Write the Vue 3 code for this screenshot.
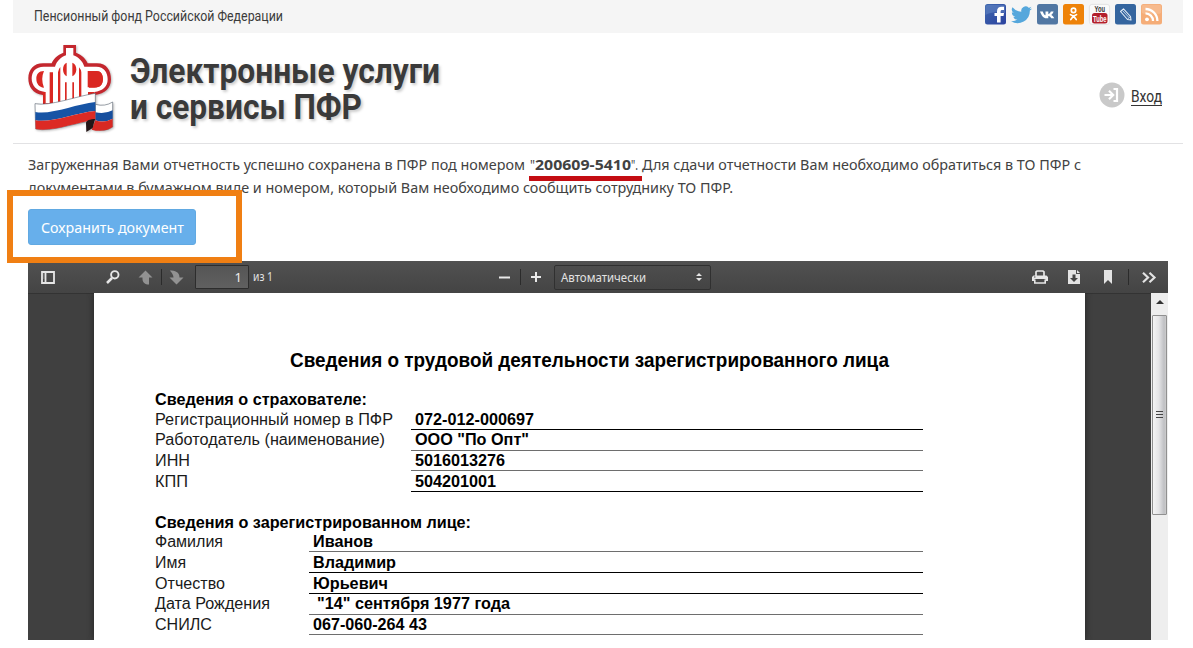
<script setup>
import { h } from 'vue'

// One line of text set to an exact measure; b is the baseline inside the box.
const Line = (p) =>
  h('svg', { width: p.w, height: p.h, class: 'line' }, [
    h('text', { x: 0, y: p.b, textLength: p.w, lengthAdjust: 'spacingAndGlyphs', fill: 'currentColor' }, p.t),
  ])
Line.props = ['t', 'w', 'h', 'b']

const sections = [
  {
    title: 'Сведения о страхователе:', w: 212, kind: 'wide',
    rows: [
      { k: 'Регистрационный номер в ПФР', kw: 238, v: '072-012-000697', vw: 119, h: 21, dark: true },
      { k: 'Работодатель (наименование)', kw: 230, v: 'ООО "По Опт"', vw: 114, h: 21, up: 1 },
      { k: 'ИНН', kw: 35, v: '5016013276', vw: 90, h: 20 },
      { k: 'КПП', kw: 33, v: '504201001', vw: 81, h: 21, dark: true },
    ],
  },
  {
    title: 'Сведения о зарегистрированном лице:', w: 316, kind: 'narrow',
    rows: [
      { k: 'Фамилия', kw: 68, v: 'Иванов', vw: 60, h: 20 },
      { k: 'Имя', kw: 31, v: 'Владимир', vw: 83, h: 21, dark: true },
      { k: 'Отчество', kw: 70, v: 'Юрьевич', vw: 75, h: 21, dark: true },
      { k: 'Дата Рождения', kw: 115, v: '"14" сентября 1977 года', vw: 193, h: 21, shift: true, up: 1 },
      { k: 'СНИЛС', kw: 57, v: '067-060-264 43', vw: 114, h: 20 },
    ],
  },
]
</script>

<template>
  <div class="page">
    <div class="topbar">
      <Line class="org" t="Пенсионный фонд Российской Федерации" :w="249" :h="33" :b="21" />
      <div class="social">
        <svg viewBox="0 0 21 21">
          <defs><linearGradient id="fb" x2="1" y2="1"><stop stop-color="#3f68ae" /><stop offset="1" stop-color="#2b429f" /></linearGradient></defs>
          <rect width="21" height="20.5" rx="2.5" fill="url(#fb)" />
          <path d="M.5 11Q7 7 20 9V3Q20 1 18 1H3Q.5 1 .5 3Z" fill="#6c8fca" opacity=".45" />
          <path d="M12 18.500V12H9.500V9H12V7.200C12 4 14 2.700 16.500 2.700H19V6H17.300C16 6 15.600 6.600 15.600 7.600V9H19L18.500 12H15.600V18.500Z" fill="#fff" />
        </svg>
        <svg viewBox="0 0 21 21"><path transform="translate(0 .5) scale(.875 .86)" d="M24 4.600a10 10 0 0 1-2.800.8 5 5 0 0 0 2.100-2.700 10 10 0 0 1-3.100 1.200A4.900 4.900 0 0 0 11.800 8.300 14 14 0 0 1 1.700 3.200a4.900 4.900 0 0 0 1.500 6.500 5 5 0 0 1-2.200-.6 4.900 4.900 0 0 0 3.900 4.900 5 5 0 0 1-2.200.1 4.900 4.900 0 0 0 4.600 3.400A10 10 0 0 1 0 19.500a14 14 0 0 0 21.500-12.400A10 10 0 0 0 24 4.600z" fill="#55a7dc" /></svg>
        <svg viewBox="0 0 21 21">
          <rect width="21" height="20.500" rx="2.500" fill="#5177a3" />
          <path d="M10.400 14.300H9.300C6.400 14.300 4.500 11.700 3 7.500H5.800C6.500 9.800 7.500 11 8.500 11.300V7.500H11.300V10C12.400 9.900 13.300 8.700 13.800 7.500H16.600C16.200 9 15.200 10.200 14.300 10.900C15.400 11.500 16.600 12.700 17.300 14.300H14.200C13.700 13.200 12.700 12.200 11.300 12V14.300Z" fill="#fff" />
        </svg>
        <svg viewBox="0 0 21 21">
          <rect width="21" height="20.500" rx="2.500" fill="#ee8208" />
          <circle cx="10.500" cy="6.400" r="2.200" fill="none" stroke="#fff" stroke-width="1.700" />
          <path d="M7.500 10.600Q10.500 13 13.500 10.600M10.500 12L7.800 15.600M10.500 12L13.200 15.600" fill="none" stroke="#fff" stroke-width="1.700" stroke-linecap="round" />
        </svg>
        <svg viewBox="0 0 21 21">
          <rect x=".4" y=".4" width="20.200" height="20" rx="2.500" fill="#fafafa" stroke="#ddd" stroke-width=".7" />
          <rect x="3" y="9" width="15.500" height="10.500" rx="2.500" fill="#b3202c" />
          <text class="yt" x="5.500" y="8" textLength="10.500" lengthAdjust="spacingAndGlyphs" fill="#333">You</text>
          <text class="yt" x="4" y="17.500" textLength="13.500" lengthAdjust="spacingAndGlyphs" fill="#fff">Tube</text>
        </svg>
        <svg viewBox="0 0 21 21">
          <rect width="21" height="20.500" rx="2.500" fill="#34659f" />
          <path d="M5.500 7.500L8.500 4.800L15.500 12.500L16 16L12.500 15.500Z" fill="none" stroke="#e4edf7" stroke-width="1.100" stroke-linejoin="round" />
          <path d="M7.500 6.500L14 13.500M12.500 15.200L15.300 12.500" fill="none" stroke="#e4edf7" stroke-width=".8" />
        </svg>
        <svg viewBox="0 0 21 21">
          <rect width="21" height="20.500" rx="2.500" fill="#f5ad78" />
          <rect x=".8" y=".8" width="19.400" height="9" rx="2" fill="#f8c39b" opacity=".6" />
          <circle cx="6" cy="15.300" r="1.900" fill="#fff" />
          <path d="M4.500 9.400A7.500 7.500 0 0 1 12 17M4.500 5A12 12 0 0 1 16.400 17" fill="none" stroke="#fff" stroke-width="2.300" />
        </svg>
      </div>
    </div>

    <div class="header">
      <svg class="logo" viewBox="36 24 264 276">
        <path d="M145 30H183V53C201 60 213 72 218 85H246C276 85 288 108 288 133C288 160 270 176 240 180V212H84V180C52 176 40 154 40 130C40 104 56 85 84 85H110C115 72 127 60 145 53Z" fill="#c4272e" />
        <path d="M153 39H175V61C191 67 203 79 208 95H244C267 95 278 112 278 133C278 156 263 168 238 171V205H90V171C64 168 50 152 50 130C50 110 62 95 86 95H120C125 79 137 67 153 61Z" fill="#fff" />
        <path d="M87 108C71 108 64 118 64 131C64 146 72 156 87 158C80 140 80 124 87 108Z" fill="#da2822" />
        <path d="M222 108H243C258 108 264 118 264 132C264 149 255 158 238 158H222V147H240C248 146 250 139 250 132C250 125 247 121 240 121H222Z" fill="#da2822" />
        <path d="M218 108H244C258 108 263 118 263 132C263 149 255 157 240 157H218Z" fill="#da2822" />
        <path d="M104 112H114V205H104ZM129 112Q131 101 136 96V205H129ZM150 142H155V205H150ZM172 142H177V205H172ZM192 97Q198 103 199 112V205H192Z" fill="#da2822" />
        <path d="M155 83Q144 88 144 104Q145 118 155 124ZM172 83Q184 88 184 104Q183 118 172 124Z" fill="#da2822" />
        <path d="M80 171H92V205H84V180ZM219 171H238V205H219Z" fill="#da2822" />
        <g stroke="#394454" stroke-width="1.500">
          <path d="M241 208Q270 216 293 201V276Q265 294 240 279Z" fill="#fff" />
          <path d="M60 206C105 215 185 183 241 175V256C181 262 110 292 62 282Z" fill="#fff" />
        </g>
        <path d="M241 232Q270 238 293 226V251Q268 265 241 256Z" fill="#174f9e" />
        <path d="M241 256Q268 265 293 251V276Q265 294 230 284Z" fill="#d72923" />
        <path d="M61 231C110 240 183 207 241 201V228C183 233 109 265 61 256Z" fill="#1754a5" />
        <path d="M61 256C109 265 183 233 241 228V255C183 262 110 292 62 282Z" fill="#dc2a24" />
        <path d="M241 252C225 252 213 257 213 264L214 291L233 279L239 256Z" fill="#241617" />
      </svg>
      <div class="brand">
        <Line t="Электронные услуги" :w="310" :h="36" :b="29" />
        <Line t="и сервисы ПФР" :w="232" :h="36" :b="29" />
      </div>
      <div class="login">
        <svg width="26" height="26" viewBox="0 0 26 26">
          <circle cx="13" cy="13" r="12.500" fill="#c9c9c9" />
          <path d="M5.500 13H13.500M10 8.800L14.200 13L10 17.200M14.500 7H18V19H14.500" fill="none" stroke="#fff" stroke-width="2.200" />
        </svg>
        <a class="enter"><Line t="Вход" :w="31" :h="19" :b="16" /></a>
      </div>
    </div>

    <div class="message">
      <div class="row">
        <Line t="Загруженная Вами отчетность успешно сохранена в ПФР под номером" :w="497" :h="23" :b="16" />
        <span class="number">
          <Line t="&quot;" :w="5" :h="23" :b="16" />
          <Line class="bold" t="200609-5410" :w="96" :h="23" :b="16" />
          <Line t="&quot;." :w="7" :h="23" :b="16" />
        </span>
        <Line t="Для сдачи отчетности Вам необходимо обратиться в ТО ПФР с" :w="439" :h="23" :b="16" />
      </div>
      <div class="row">
        <Line t="документами в бумажном виде и номером, который Вам необходимо сообщить сотруднику ТО ПФР." :w="705" :h="23" :b="16" />
      </div>
    </div>

    <div class="action">
      <button class="save"><Line t="Сохранить документ" :w="143" :h="36" :b="24" /></button>
      <div class="highlight"></div>
    </div>

    <div class="viewer">
      <div class="toolbar">
        <svg class="i-side" width="14" height="13" viewBox="0 0 14 13"><path d="M1 1H13V12H1ZM4.500 1V12" fill="none" stroke="#e6e6e6" stroke-width="1.800" /><path d="M2 3H4M2 5H4M2 7H4" stroke="#aaa" stroke-width=".6" /></svg>
        <svg class="i-find" width="14" height="14" viewBox="0 0 14 14"><circle cx="8.800" cy="4.800" r="3.700" fill="none" stroke="#e6e6e6" stroke-width="1.900" /><path d="M6 8L1 13" stroke="#e6e6e6" stroke-width="2.500" /></svg>
        <svg class="i-up" width="15" height="15" viewBox="0 0 15 15"><path d="M7.500 .5L14.500 7.500H11V14.500C7 14.500 4.500 12.500 4.500 9V7.500H.5Z" fill="#929292" /></svg>
        <i class="sep"></i>
        <svg class="i-down" width="15" height="15" viewBox="0 0 15 15"><path d="M7.500 14.500L.5 7.500H4.500C4.500 5 3 3 .8 .5C6 .5 10.500 2 10.500 7.500H14.500Z" fill="#929292" /></svg>
        <div class="pageno">1</div>
        <Line class="of" t="из 1" :w="20" :h="32" :b="20" />
        <svg class="i-minus" width="11" height="3" viewBox="0 0 11 3"><path d="M0 1.500H11" stroke="#e9e9e9" stroke-width="2" /></svg>
        <i class="sep s2"></i>
        <svg class="i-plus" width="10" height="10" viewBox="0 0 10 10"><path d="M0 5H10M5 0V10" stroke="#e9e9e9" stroke-width="2" /></svg>
        <div class="zoom">
          <Line t="Автоматически" :w="85" :h="23" :b="16" />
          <svg width="6" height="8" viewBox="0 0 6 8"><path d="M3 0L6 3H0ZM3 8L0 5H6Z" fill="#e4e4e4" /></svg>
        </div>
        <svg class="i-print" width="16" height="14" viewBox="0 0 16 14"><path d="M4 6V1.800L5 1H11L12 1.800V6" fill="none" stroke="#e6e6e6" stroke-width="1.700" /><path d="M1.500 5.500H14.500L16 7V11H13.500V9H2.500V11H0V7Z" fill="#e6e6e6" /><path d="M2.800 9.500V13H13.200V9.500" fill="none" stroke="#e6e6e6" stroke-width="1.600" /><path d="M2 7H3.500" stroke="#555" /></svg>
        <svg class="i-load" width="12" height="14" viewBox="0 0 12 14"><path d="M0 0H8V4H12V14H0Z" fill="#e3e3e3" /><path d="M9 0L12 3H9Z" fill="#e3e3e3" /><path d="M4.500 4.500H7.500V8H10L6 12L2 8H4.500Z" fill="#444" /></svg>
        <svg class="i-mark" width="8" height="14" viewBox="0 0 8 14"><path d="M0 0H8V14L4 10L0 14Z" fill="#e3e3e3" /></svg>
        <i class="sep s3"></i>
        <svg class="i-more" width="14" height="11" viewBox="0 0 14 11"><path d="M1 .8L6 5.500L1 10.200M7.500 .8L12.500 5.500L7.500 10.200" fill="none" stroke="#e3e3e3" stroke-width="2.200" /></svg>
      </div>
      <div class="stage">
        <div class="sheet">
          <Line class="heading" t="Сведения о трудовой деятельности зарегистрированного лица" :w="599" :h="30" :b="21" />
          <section v-for="s in sections" :key="s.kind" :class="s.kind">
            <Line class="caption" :t="s.title" :w="s.w" :h="20" :b="16" />
            <div v-for="r in s.rows" :key="r.k" class="entry" :style="{ height: r.h + 'px' }">
              <div class="key"><Line :t="r.k" :w="r.kw" :h="r.h" :b="r.h - 5 - (r.up || 0)" /></div>
              <div class="value" :class="{ dark: r.dark, shift: r.shift }"><Line :t="r.v" :w="r.vw" :h="r.h - 1" :b="r.h - 5 - (r.up || 0)" /></div>
            </div>
          </section>
        </div>
        <div class="scroll">
          <svg width="17" height="22" viewBox="0 0 17 22"><path d="M5 11L9 7L13 11Z" fill="#333" /></svg>
          <div class="thumb"><i></i><i></i><i></i></div>
        </div>
      </div>
    </div>
  </div>
</template>

<style>
body { background: #fff; }
</style>

<style scoped>
.page { width: 1193px; height: 648px; overflow: hidden; background: #fff; font-family: Roboto, "Liberation Sans", sans-serif; color: #3b3b3b; }
svg { display: block; flex: none; overflow: visible; }
i { display: block; flex: none; }
.topbar { box-sizing: border-box; margin-left: 13px; width: 1170px; height: 33px; padding: 0 21px 0 21px; display: flex; justify-content: space-between; background: #f5f5f5; font-size: 14px; }
.social { display: flex; gap: 5px; padding-top: 4px; }
.social svg { width: 21px; height: 21px; }
.yt { font: bold 9px "Liberation Sans", sans-serif; }
.header { box-sizing: border-box; margin-left: 13px; width: 1170px; height: 111px; padding: 10px 21px 0 14px; display: flex; border-bottom: 1px solid #e2e2e4; }
.logo { width: 88px; height: 92px; filter: drop-shadow(1px 1px 1px #bbb); }
.brand { margin: 11px 0 0 15px; font-size: 34.500px; font-weight: 700; text-shadow: 2px 2px 3px #ccc; color: #3a3a3a; }
.login { margin-left: auto; height: 26px; margin-top: 39px; display: flex; gap: 6px; font-size: 16px; color: #333; }
.enter { height: 20px; margin-top: 4px; border-bottom: 1px solid #333; box-sizing: border-box; }
.message { margin: 10px 0 0 28px; height: 46px; font: 15px "Noto Sans", sans-serif; color: #424242; }
.row { display: flex; }
.number { position: relative; display: flex; margin: 0 4px 0 5px; }
.number::after { content: ""; position: absolute; left: -1px; top: 22px; width: 113px; height: 5px; background: #c40d12; }
.bold { font-weight: 700; }
.action { position: relative; margin-left: 28px; height: 61px; }
.save { position: absolute; z-index: 2; left: 0; top: 9px; width: 168px; height: 36px; padding: 0 0 0 12px; border: 1px solid #61a9e2; border-radius: 3px; background: #67afeb; color: #fff; font: 15px "Noto Sans", sans-serif; }
.save svg { margin-top: -1px; }
.highlight { position: absolute; z-index: 1; box-sizing: border-box; left: -21px; top: -10px; width: 235px; height: 73px; border: 6px solid #f07f13; background: #fff; }
.viewer { margin-left: 28px; width: 1140px; }
.toolbar { height: 32px; display: flex; align-items: center; background: linear-gradient(#515151, #444); color: #e2e2e2; font: 12px "Noto Sans", sans-serif; }
.i-side { margin-left: 13px; }
.i-find { margin-left: 51px; margin-top: -1px; }
.i-up { margin-left: 18px; }
.sep { width: 1px; height: 16px; margin-left: 8px; background: #2b2b2b; }
.i-down { margin-left: 7px; }
.pageno { box-sizing: border-box; flex: none; width: 54px; height: 24px; margin-left: 11px; padding-right: 6px; text-align: right; font-size: 13px; line-height: 22px; border: 1px solid #2d2d2d; border-radius: 1px; background: linear-gradient(#555, #606060); color: #ededed; }
.of { margin-left: 4px; }
.i-minus { margin-left: 226px; }
.s2 { margin-left: 10px; }
.i-plus { margin-left: 10px; }
.zoom { box-sizing: border-box; flex: none; width: 157px; height: 25px; margin-left: 13px; padding: 0 8px 0 6px; display: flex; justify-content: space-between; align-items: center; border: 1px solid #303030; border-radius: 2px; background: linear-gradient(#4d4d4d, #444); }
.i-print { margin-left: 321px; }
.i-load { margin-left: 20px; }
.i-mark { margin-left: 24px; }
.s3 { margin-left: 16px; }
.i-more { margin-left: 13px; }
.stage { height: 347px; display: flex; background: #404040; box-shadow: inset 0 1px 0 #333; }
.sheet { box-sizing: border-box; width: 991px; height: 347px; margin-left: 66px; padding: 53px 0 0 61px; background: #fff; box-shadow: 0 0 7px #222; clip-path: inset(0 -8px); color: #000; font: 16px "Liberation Sans", Arial, sans-serif; }
.heading { margin-left: 135px; font-size: 20px; font-weight: 700; }
section { padding-top: 13px; }
.narrow { padding-top: 20px; }
.caption { font-weight: 700; }
.entry { display: flex; }
.key { width: 256px; color: #1a1a1a; }
.narrow .key { width: 154px; }
.value { box-sizing: border-box; width: 512px; padding-left: 4px; border-bottom: 1px solid #6e6e6e; font-weight: 700; }
.narrow .value { width: 614px; }
.narrow .value.shift { padding-left: 8px; }
.value.dark { border-color: #000; }
.scroll { width: 17px; height: 347px; margin-left: auto; background: #eee; }
.thumb { box-sizing: border-box; width: 15px; height: 200px; margin-left: 1px; padding-top: 95px; display: flex; flex-direction: column; align-items: center; gap: 2px; border: 1px solid #909090; border-radius: 1px; background: linear-gradient(90deg, #f4f4f4, #e4e4e6 45%, #bfc0c3 85%, #ccc); }
.thumb i { width: 7px; height: 1px; background: #444; }
</style>
